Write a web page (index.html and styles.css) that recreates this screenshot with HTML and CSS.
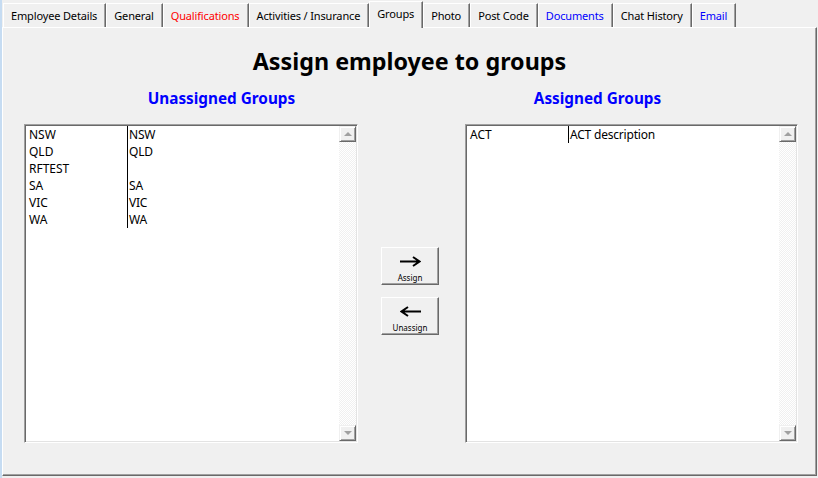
FILE: index.html
```html
<!DOCTYPE html>
<html>
<head>
    <title>Employee Groups</title>
    <meta charset="UTF-8">
    <link rel="stylesheet" href="styles.css">
</head>
<body>
    <div class="window">
        <div class="tabs">
            <div class="tab">Employee Details</div>
            <div class="tab">General</div>
            <div class="tab red">Qualifications</div>
            <div class="tab">Activities / Insurance</div>
            <div class="tab active">Groups</div>
            <div class="tab">Photo</div>
            <div class="tab">Post Code</div>
            <div class="tab blue">Documents</div>
            <div class="tab">Chat History</div>
            <div class="tab blue">Email</div>
        </div>
        <div class="panel">
            <h1>Assign employee to groups</h1>
            <div class="headings">
                <h2>Unassigned Groups</h2>
                <h2>Assigned Groups</h2>
            </div>
            <div class="lists">
                <div class="listbox">
                    <div class="rows">
                        <div class="row"><span class="c1">NSW</span><span class="c2">NSW</span></div>
                        <div class="row"><span class="c1">QLD</span><span class="c2">QLD</span></div>
                        <div class="row"><span class="c1">RFTEST</span><span class="c2"></span></div>
                        <div class="row"><span class="c1">SA</span><span class="c2">SA</span></div>
                        <div class="row"><span class="c1">VIC</span><span class="c2">VIC</span></div>
                        <div class="row"><span class="c1">WA</span><span class="c2">WA</span></div>
                    </div>
                    <div class="scrollbar">
                        <div class="sb-btn"><span class="tri up"></span></div>
                        <div class="sb-track"></div>
                        <div class="sb-btn"><span class="tri down"></span></div>
                    </div>
                </div>

                <div class="actions">
                    <button class="move">
                        <svg width="21" height="11" viewBox="0 0 21 11">
                            <path d="M0 5.5 H19 M13 1 L19.5 5.5 L13 10" fill="none" stroke="#000" stroke-width="2"/>
                        </svg>
                        <span>Assign</span>
                    </button>
                    <button class="move">
                        <svg width="21" height="11" viewBox="0 0 21 11">
                            <path d="M21 5.5 H2 M8 1 L1.5 5.5 L8 10" fill="none" stroke="#000" stroke-width="2"/>
                        </svg>
                        <span>Unassign</span>
                    </button>
                </div>

                <div class="listbox right">
                    <div class="rows">
                        <div class="row"><span class="c1">ACT</span><span class="c2">ACT description</span></div>
                    </div>
                    <div class="scrollbar">
                        <div class="sb-btn"><span class="tri up"></span></div>
                        <div class="sb-track"></div>
                        <div class="sb-btn"><span class="tri down"></span></div>
                    </div>
                </div>
            </div>
        </div>
    </div>
</body>
</html>
```

FILE: styles.css
```css
body {
    margin: 0;
    background: #f0f0f0;
    font-family: "Noto Sans", "Open Sans", sans-serif;
    font-size: 12px;
    color: #000;
}
.window {
    height: 478px;
    box-sizing: border-box;
    border-left: 2px solid #c6dcf2;
    padding-bottom: 2px;
    display: flex;
    flex-direction: column;
}

/* tab strip */
.tabs {
    display: flex;
    height: 27px;
    padding-left: 1px;
    position: relative;
    z-index: 1;
}
.tab {
    margin-top: 3px;
    height: 24px;
    box-sizing: border-box;
    padding: 0 8px 0 7px;
    font-size: 11px;
    letter-spacing: -0.15px;
    line-height: 23px;
    border-top: 1px solid #fff;
    border-left: 1px solid #fff;
    border-right: 1px solid #696969;
    box-shadow: inset -1px 0 #a0a0a0;
    white-space: nowrap;
}
.tab.red { color: #ff0000; }
.tab.blue { color: #0000ff; }
.tab.active {
    margin-top: 1px;
    height: 27px;
    background: #f0f0f0;
    line-height: 23px;
}

.panel {
    flex: 1;
    margin-right: 1px;
    border-top: 1px solid #fff;
    border-left: 1px solid #fff;
    border-right: 1px solid #696969;
    border-bottom: 1px solid #696969;
    box-shadow: inset -1px -1px #a0a0a0;
}
h1 {
    margin: 19px 0 0 0;
    font-size: 23.3px;
    line-height: 28px;
    font-weight: bold;
    text-align: center;
}
.headings {
    display: grid;
    grid-template-columns: 376px 376px;
    justify-content: center;
    margin-top: 14px;
}
h2 {
    margin: 0;
    color: #0000ff;
    font-size: 15.3px;
    line-height: 18px;
    font-weight: bold;
    text-align: center;
}

.lists {
    display: flex;
    margin-top: 17px;
    padding-left: 21px;
}
.listbox {
    width: 334px;
    height: 319px;
    box-sizing: border-box;
    background: #fff;
    border-top: 1px solid #a0a0a0;
    border-left: 1px solid #a0a0a0;
    border-right: 1px solid #fff;
    border-bottom: 1px solid #fff;
    box-shadow: inset 1px 1px #696969, inset -1px -1px #e3e3e3;
    padding: 1px;
    display: flex;
}
.listbox.right {
    width: 333px;
}
.rows {
    flex: 1;
}
.row {
    display: flex;
    height: 17px;
    line-height: 17px;
}
.c1 {
    width: 102px;
    box-sizing: border-box;
    padding-left: 3px;
    border-right: 1px solid #000;
}
.c2 {
    padding-left: 1px;
    letter-spacing: -0.2px;
}

.scrollbar {
    width: 17px;
    display: flex;
    flex-direction: column;
}
.sb-btn {
    height: 16px;
    box-sizing: border-box;
    background: #f0f0f0;
    border-top: 1px solid #f0f0f0;
    border-left: 1px solid #f0f0f0;
    border-right: 1px solid #696969;
    border-bottom: 1px solid #696969;
    box-shadow: inset 1px 1px #fff, inset -1px -1px #a0a0a0;
    display: flex;
    align-items: center;
    justify-content: center;
}
.sb-track {
    flex: 1;
    background: repeating-conic-gradient(#fff 0 25%, #f0f0f0 0 50%) 0 0 / 2px 2px;
}
.tri {
    width: 0;
    height: 0;
    border-left: 4px solid transparent;
    border-right: 4px solid transparent;
}
.tri.up { border-bottom: 4px solid #a0a0a0; }
.tri.down { border-top: 4px solid #a0a0a0; }

.actions {
    width: 107px;
    display: flex;
    flex-direction: column;
    align-items: center;
    gap: 12px;
    padding: 123px 3px 0 0;
    box-sizing: border-box;
}
.move {
    width: 58px;
    height: 38px;
    padding: 0;
    background: #f0f0f0;
    border-top: 1px solid #fff;
    border-left: 1px solid #fff;
    border-right: 1px solid #696969;
    border-bottom: 1px solid #696969;
    box-shadow: inset -1px -1px #a0a0a0;
    display: flex;
    flex-direction: column;
    align-items: center;
    font-family: "Noto Sans", sans-serif;
}
.move svg {
    margin-top: 8px;
}
.move span {
    margin-top: 6px;
    font-size: 8px;
    line-height: 10px;
    color: #000;
}
```
